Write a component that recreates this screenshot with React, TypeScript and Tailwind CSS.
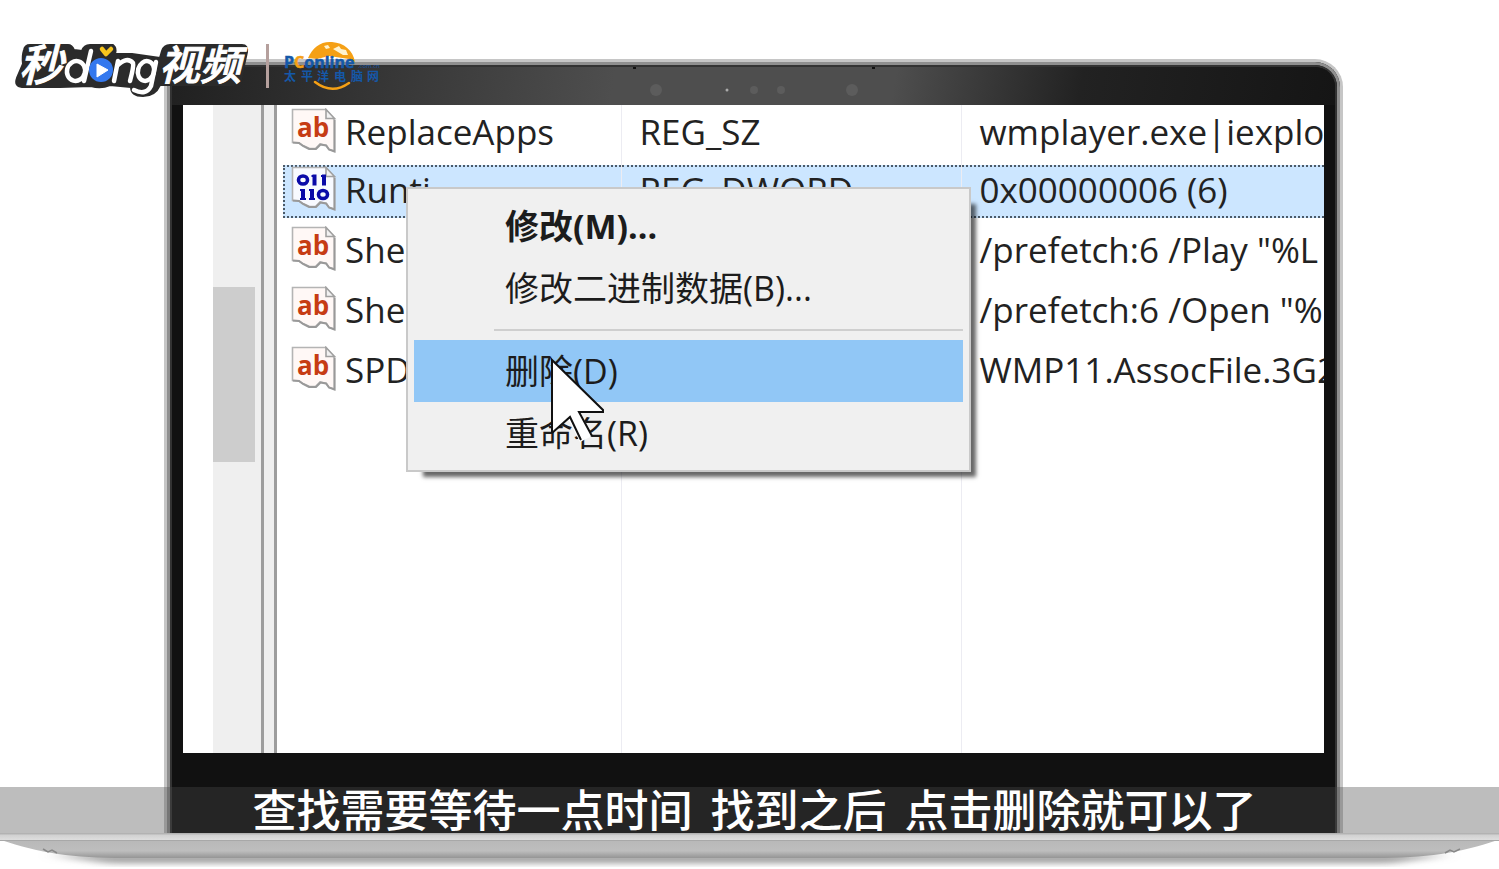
import React from "react";

type Entry = { kind: "text" | "binary"; name: string; type: string; data: string };

const entries: Entry[] = [
  { kind: "text", name: "ReplaceApps", type: "REG_SZ", data: "wmplayer.exe|iexplor" },
  { kind: "binary", name: "Runti", type: "REG_DWORD", data: "0x00000006 (6)" },
  { kind: "text", name: "She", type: "", data: '/prefetch:6 /Play "%L' },
  { kind: "text", name: "She", type: "", data: '/prefetch:6 /Open "%' },
  { kind: "text", name: "SPD", type: "", data: "WMP11.AssocFile.3G2" },
];

function ValueIcon({ kind }: { kind: Entry["kind"] }) {
  return (
    <svg width="46" height="46" viewBox="0 0 46 46" className="shrink-0" aria-hidden="true">
      <path
        d="M1.5 1.5H35L43.5 12V43L38 41.5L35.5 37.5L29 36L24.5 40.5H18.5L12 37.5L8 35L1.5 34.5Z"
        fill={kind === "text" ? "#fff8f6" : "#f8faff"}
        stroke="#b4b4b4"
        strokeWidth="1.6"
      />
      <path d="M2 34.500L8 35L12 38L18 41H25L29.500 36.500L35 37.500L38 41.500L43.500 43.500V12" fill="none" stroke="#999" strokeWidth="2" />
      <path d="M35 1.500V10.500H43.500Z" fill="#f2f2f2" stroke="#a0a0a0" strokeWidth="1.600" />
      {kind === "text" ? (
        <text x="6" y="29" fontSize="26" fontWeight="700" fill="#c63c14" className="font-['Open_Sans',sans-serif]">
          ab
        </text>
      ) : (
        <g fill="none" stroke="#0a0aa8" strokeWidth="3.600">
          <ellipse cx="12" cy="14" rx="4.500" ry="4" />
          <path d="M23.500 8.500V19.500M33 8.500V19.500" strokeWidth="4" />
          <path d="M20.500 10H24M30 10H33" strokeWidth="2" />
          <path d="M12 23V34M21 23V34" strokeWidth="4" />
          <path d="M9 24H12M18 24H21M9 33H15M18 33H24" strokeWidth="2" />
          <ellipse cx="32" cy="28.500" rx="4.500" ry="4" />
        </g>
      )}
    </svg>
  );
}

function ValueTable() {
  return (
    <table className="h-full w-full table-fixed border-collapse text-left text-[35px] leading-none text-[#222]">
      <colgroup>
        <col className="w-[344px]" />
        <col className="w-[340px]" />
        <col />
      </colgroup>
      <tbody>
        {entries.map((e, i) => {
          const selected = i === 1;
          const band = selected
            ? "h-[53px] border-y-2 border-dotted border-[#4b5a68] bg-[#cce6ff]"
            : "h-[53px]";
          return (
            <tr key={i} className={i === 0 ? "h-14" : "h-[60px]"}>
              <td className="border-r border-[#ececf2] p-0 pl-1.5">
                <div className={`${band} flex items-center gap-2 pb-1 ${selected ? "border-l-2 pl-1.5" : "pl-2"}`}>
                  <ValueIcon kind={e.kind} />
                  <span>{e.name}</span>
                </div>
              </td>
              <td className="border-r border-[#ececf2] p-0">
                <div className={`${band} flex items-center pb-1 pl-[18px]`}>{e.type}</div>
              </td>
              <td className="p-0">
                <div className={`${band} flex items-center overflow-hidden whitespace-nowrap pb-1 pl-[18px]`}>{e.data}</div>
              </td>
            </tr>
          );
        })}
        <tr>
          <td className="border-r border-[#ececf2]" />
          <td className="border-r border-[#ececf2]" />
          <td />
        </tr>
      </tbody>
    </table>
  );
}

function ContextMenu() {
  const item = "block h-[62px] w-full pl-[91px] text-left whitespace-nowrap";
  return (
    <div
      role="menu"
      className="absolute left-[223px] top-[82px] w-[565px] border-2 border-[#c9c9c9] bg-[#f0f0f0] p-1.5 text-[34px] leading-none text-[#1c1c1c] shadow-[11px_11px_4px_-6px_rgba(0,0,0,0.6)]"
    >
      <button role="menuitem" className={`${item} font-bold`}>修改(M)...</button>
      <button role="menuitem" className={item}>修改二进制数据(B)...</button>
      <div className="flex h-[21px] items-center pl-20">
        <div className="h-0.5 w-full bg-[#cfcfcf]" />
      </div>
      <button role="menuitem" className={`${item} bg-[#91c7f6]`}>删除(D)</button>
      <button role="menuitem" className={item}>重命名(R)</button>
      <svg width="56" height="88" viewBox="0 0 56 88" className="absolute left-[142px] top-[168px]" aria-hidden="true">
        <path d="M2 3V76L18 62L30 85L42 79L31 56L53 54Z" fill="#fff" />
        <path d="M2 76V3L53 53V55H29L42 79M2 76L20 60L31 83" fill="none" stroke="#111" strokeWidth="2" />
      </svg>
    </div>
  );
}

function Brand() {
  return (
    <div className="absolute left-0 top-9 flex items-start">
      <svg width="266" height="66" viewBox="0 0 266 66" role="img" aria-label="秒dong视频">
        <path
          d="M30 9H68Q72 9 74 14L82 15Q84 9 90 9H113Q117 12 115 18H132L160 22L162 15Q164 9 170 9H242Q248 9 247 16L241 43Q239 49 232 49H160Q155 60 143 60Q131 60 131 51L110 49Q101 53 91 50L60 51H22Q14 50 17 42L23 28Q22 20 24 14Q25 9 30 9Z"
          fill="#2b2b2b"
          stroke="#2b2b2b"
          strokeWidth="2"
          strokeLinejoin="round"
        />
        <g fill="#fff" stroke="#fff" strokeWidth="1" fontStyle="italic" className="font-['Noto_Sans_CJK_SC',sans-serif]">
          <text x="19" y="45" fontSize="44" fontWeight="500">秒</text>
          <text x="159" y="44" fontSize="41" fontWeight="500">视频</text>
        </g>
        <g fill="none" stroke="#fff" strokeWidth="4.500" strokeLinecap="round" strokeLinejoin="round">
          <ellipse cx="76" cy="35" rx="9" ry="10" transform="rotate(15 76 35)" />
          <path d="M91 15L84 45M118 25L114 45M117 30Q127 20 133 27Q134 30 130 45" />
          <ellipse cx="146" cy="35" rx="8" ry="10" transform="rotate(15 146 35)" />
          <path d="M156 26L151 50Q146 60 134 54" />
        </g>
        <circle cx="101" cy="34" r="12" fill="#3478ee" />
        <path d="M97 28V41L108 34Z" fill="#fff" stroke="#fff" strokeLinejoin="round" />
        <path d="M102 13L106 18L111 13" fill="none" stroke="#f7c51d" strokeWidth="4.500" strokeLinecap="round" strokeLinejoin="round" />
      </svg>
      <div className="mt-2 h-11 w-[3px] bg-[#b5a09d]" />
      <svg width="112" height="56" viewBox="0 0 112 56" className="ml-3" role="img" aria-label="PConline 太平洋电脑网">
        <path d="M27 22C32 11 40 5 51 6C63 7 72 14 74 26L68 23L48 20L36 23Z" fill="#f5a015" />
        <path d="M43 10L47 9L49 12L45 13ZM52 13L58 10L60 13L65 14L67 19L62 19L57 16Z" fill="#fff3cf" />
        <path d="M34 46Q51 59 68 47" fill="none" stroke="#f5a015" strokeWidth="2.500" strokeLinecap="round" />
        <g className="font-['Open_Sans',sans-serif]" fill="#1558a8" stroke="#1558a8" strokeWidth="0.500" fontWeight="700">
          <text x="3" y="32" fontSize="16">
            P<tspan fill="#f5a015" stroke="#f5a015">C</tspan>online
          </text>
        </g>
        <text x="77" y="32" fontSize="6" fill="#1558a8" className="font-['Open_Sans',sans-serif]">.com.cn</text>
        <text x="3 20 36 53 70 86" y="45" fontSize="12" fontWeight="700" fill="#1558a8" className="font-['Noto_Sans_CJK_SC',sans-serif]">
          太平洋电脑网
        </text>
      </svg>
    </div>
  );
}

function Base() {
  return (
    <svg className="block h-9 w-full" viewBox="0 0 1499 36" preserveAspectRatio="none" aria-hidden="true">
      <defs>
        <linearGradient id="body" x2="0" y2="1">
          <stop offset="0" stopColor="#b8b8b8" />
          <stop offset="0.6" stopColor="#bebebe" />
          <stop offset="1" stopColor="#959595" />
        </linearGradient>
        <linearGradient id="lip" x2="0" y2="1">
          <stop offset="0" stopColor="#aaa" />
          <stop offset="0.35" stopColor="#d2d2d2" />
          <stop offset="1" stopColor="#dedede" />
        </linearGradient>
        <filter id="soft" x="-5%" y="-50%" width="110%" height="200%">
          <feGaussianBlur stdDeviation="8 3" />
        </filter>
      </defs>
      <path d="M50 22H1449L1390 30H110Z" fill="#999" filter="url(#soft)" />
      <path d="M1 7H1498C1460 20 1425 25 1375 25H124C74 25 39 20 1 7Z" fill="url(#body)" />
      <path d="M0 0H1499V7H0Z" fill="url(#lip)" />
      <path d="M0 7.500H1499" stroke="#a8a8a8" />
      <path d="M43 16L48 19L52 17L57 20M1445 20L1450 17L1454 19L1460 16" fill="none" stroke="#888" strokeWidth="1.500" />
    </svg>
  );
}

export default function App() {
  return (
    <main className="relative overflow-hidden bg-white pt-[59px] font-['Open_Sans','Noto_Sans_CJK_SC',sans-serif]">
      <div className="relative">
        <div className="ml-[164px] mr-[156px] rounded-t-[28px] border-x-[3px] border-t-[3px] border-[#c6c6c6] bg-[#111]">
          <div className="rounded-t-[25px] border-x-[3px] border-t-[3px] border-[#8f8f8f]">
            <div className="overflow-hidden rounded-t-[22px] border-x-2 border-t-2 border-[#333]">
              <div className="flex h-[38px] items-center justify-center bg-linear-[100deg,#202020_0%,#4e4e4e_38%,#4e4e4e_62%,#222_78%,#151515_100%]">
                <svg width="242" height="38" viewBox="0 0 242 38" aria-hidden="true">
                  <g fill="#5c5c5c">
                    <circle cx="23" cy="23" r="6" />
                    <circle cx="121" cy="23" r="4" />
                    <circle cx="148" cy="23" r="4" />
                    <circle cx="219" cy="23" r="6" />
                  </g>
                  <circle cx="94" cy="23" r="1.500" fill="#aaa" />
                  <path d="M0 0H3V2H0ZM239 0H242V2H239Z" fill="#111" />
                </svg>
              </div>
              <div className="px-[11px] pb-20">
                <div className="relative flex h-[648px] overflow-hidden bg-white">
                  <div className="w-[30px] shrink-0" />
                  <div className="w-12 shrink-0 bg-[#efefef] pt-[182px]">
                    <div className="h-[175px] w-[42px] bg-[#cdcdcd]" />
                  </div>
                  <div className="w-4 shrink-0 border-x-[3px] border-[#9d9d9d] bg-[#efefef]" />
                  <div className="min-w-0 flex-1">
                    <ValueTable />
                  </div>
                  <ContextMenu />
                </div>
              </div>
            </div>
          </div>
        </div>
        <div className="absolute inset-x-0 bottom-0 flex h-[46px] items-center justify-center gap-[18px] whitespace-nowrap bg-[rgba(74,74,74,0.366)] pb-1 pl-2.5 font-['Noto_Sans_CJK_SC',sans-serif] text-[44px] font-medium leading-none text-white">
          <span>查找需要等待一点时间</span>
          <span>找到之后</span>
          <span>点击删除就可以了</span>
        </div>
      </div>
      <Base />
      <Brand />
    </main>
  );
}
